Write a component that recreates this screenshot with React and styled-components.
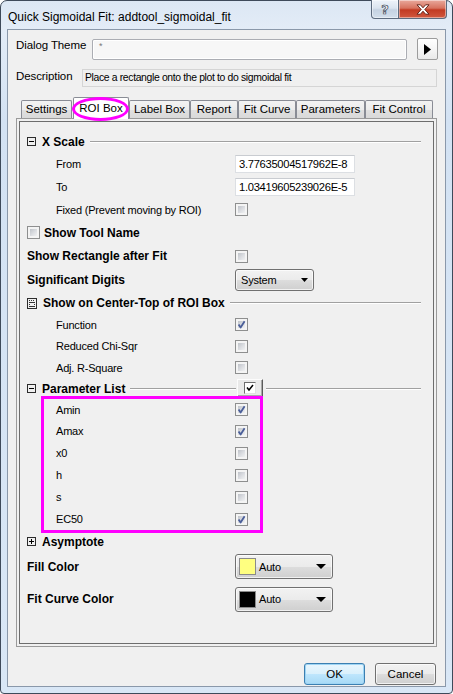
import React from 'react'
import styled, { createGlobalStyle } from 'styled-components'

const tabs = [
  { label: 'Settings', w: 51 },
  { label: 'ROI Box', w: 56, active: true },
  { label: 'Label Box', w: 61 },
  { label: 'Report', w: 48 },
  { label: 'Fit Curve', w: 58 },
  { label: 'Parameters', w: 69 },
  { label: 'Fit Control', w: 68 },
]

const centerTop = [
  { name: 'Function', on: true, h: 21 },
  { name: 'Reduced Chi-Sqr', on: false, h: 22 },
  { name: 'Adj. R-Square', on: false, h: 21 },
]

const params = [
  { name: 'Amin', on: true, h: 21 },
  { name: 'Amax', on: true, h: 22 },
  { name: 'x0', on: false, h: 22 },
  { name: 'h', on: false, h: 22 },
  { name: 's', on: false, h: 22 },
  { name: 'EC50', on: true, h: 22 },
]

const GlobalStyle = createGlobalStyle`
  html, body { margin: 0; padding: 0; background: #fff; }
  body {
    font-family: "Liberation Sans", Arial, sans-serif;
    font-size: 11px;
    letter-spacing: -0.2px;
    color: #000;
  }
  * { box-sizing: border-box; }
`

const Window = styled.div`
  width: 453px;
  height: 694px;
  border: 1px solid #3e4a5a;
  border-radius: 7px 7px 4px 4px;
  padding: 0 6px 6px;
  background: linear-gradient(180deg, #dce7f4 0px, #e3ecf7 28px, #d3e2f3 120px, #d9e7f6 100%);
  display: flex;
  flex-direction: column;
`

const TitleBar = styled.div`
  height: 28px;
  display: flex;
  align-items: flex-start;
`

const Title = styled.div`
  margin-top: 9px;
  padding-left: 1px;
  font-size: 12px;
  line-height: 14px;
  letter-spacing: 0;
`

const Caption = styled.div`
  margin-left: auto;
  margin-right: -1px;
  margin-top: -1px;
  display: flex;
`

const CapButton = styled.div`
  width: ${p => p.$w}px;
  height: 19px;
  border: 1px solid #5d6b7e;
  border-top: none;
  display: flex;
  align-items: center;
  justify-content: center;
  background: ${p => p.$close
    ? 'linear-gradient(180deg, #e9a99c 0%, #d7735f 45%, #c23a22 55%, #d1583f 100%)'
    : 'linear-gradient(180deg, #eef3fa 0%, #dbe4ef 45%, #c5d2e2 55%, #d3dfec 100%)'};
  border-radius: ${p => p.$close ? '0 0 4px 0' : '0 0 0 4px'};
  border-left: ${p => p.$close ? 'none' : '1px solid #5d6b7e'};
  box-shadow: inset 0 0 0 1px rgba(255, 255, 255, 0.45);
`

const HelpGlyph = styled.span`
  font-family: "DejaVu Sans", sans-serif;
  font-size: 13px;
  font-weight: bold;
  color: #f4f6f9;
  -webkit-text-stroke: 0.7px #3b4656;
  line-height: 1;
`

const Client = styled.div`
  flex: 1;
  border: 1px solid #8a98aa;
  background: #f0f0f0;
  display: flex;
  flex-direction: column;
`

const TopRow = styled.div`
  display: flex;
  align-items: flex-start;
  margin-top: ${p => p.$mt}px;
  padding-left: 8px;
`

const TopLabel = styled.div`
  width: ${p => p.$w}px;
  line-height: 14px;
  font-size: 11.5px;
  letter-spacing: -0.1px;
`

const ThemeField = styled.div`
  width: 315px;
  height: 21px;
  margin-top: 1px;
  border: 1px solid #abadb3;
  border-radius: 2px;
  background: #f7f7f7;
  box-shadow: inset 0 0 0 1px #fff;
  padding: 1px 0 0 6px;
  font-size: 9px;
  color: #777;
`

const ArrowButton = styled.div`
  width: 21px;
  height: 22px;
  margin-left: 10px;
  border: 1px solid #9c9c9c;
  border-radius: 2px;
  background: linear-gradient(180deg, #ffffff 0%, #f6f6f6 50%, #e9e9e9 100%);
  display: flex;
  align-items: center;
  justify-content: center;
`

const DescField = styled.div`
  width: 355px;
  height: 18px;
  border: 1px solid #d5d5d5;
  background: #f0f0f0;
  padding-left: 2px;
  line-height: 15px;
  font-size: 10.4px;
  letter-spacing: -0.35px;
`

const TabStrip = styled.div`
  display: flex;
  align-items: flex-end;
  height: 21px;
  margin-top: 10px;
  margin-left: 13px;
  position: relative;
  z-index: 2;
`

const Tab = styled.div`
  position: relative;
  width: ${p => p.$w}px;
  height: ${p => p.$active ? 22 : 18}px;
  margin-left: ${p => p.$active ? 1 : 0}px;
  margin-bottom: ${p => p.$active ? -1 : 0}px;
  padding-top: ${p => p.$active ? 2 : 0}px;
  border: 1px solid #898c95;
  border-bottom: none;
  border-radius: 2px 2px 0 0;
  background: ${p => p.$active
    ? '#ffffff'
    : 'linear-gradient(180deg, #f3f3f3 0%, #ececec 50%, #e0e0e0 51%, #d9d9d9 100%)'};
  text-align: center;
  line-height: 17px;
  font-size: 11.5px;
  letter-spacing: 0;
`

const Ellipse = styled.span`
  position: absolute;
  left: -2px;
  top: -1px;
  width: 57px;
  height: 24px;
  border: 3px solid #ff00ff;
  border-radius: 50%;
`

const Panel = styled.div`
  width: 421px;
  height: 529px;
  margin-left: 8px;
  border: 1px solid #9a9a9a;
  padding: 2px;
  position: relative;
  z-index: 1;
`

const Inner = styled.div`
  height: 100%;
  border: 1px solid #6d6d6d;
  padding: 9px 12px 0 7px;
`

const Row = styled.div`
  display: grid;
  grid-template-columns: ${p => 208 - (p.$indent || 0)}px auto;
  align-items: center;
  height: ${p => p.$h}px;
  padding-left: ${p => p.$indent || 0}px;
`

const Label = styled.span`
  line-height: 14px;
`

const BoldLabel = styled.span`
  font-size: 12px;
  font-weight: bold;
  letter-spacing: 0;
  line-height: 14px;
`

const GroupHead = styled.div`
  display: flex;
  align-items: center;
  height: ${p => p.$h}px;
`

const IconBox = styled.svg`
  flex: none;
  margin-right: ${p => p.$mr ?? 6}px;
`

const Rule = styled.span`
  flex: 1;
  height: 2px;
  border-top: 1px solid #a0a0a0;
  border-bottom: 1px solid #ffffff;
  margin-left: ${p => p.$ml ?? 5}px;
  margin-right: ${p => p.$mr ?? 0}px;
`

const ParamHead = styled.div`
  display: grid;
  grid-template-columns: 210px 26px 1fr;
  align-items: center;
  height: 21px;
`

const MiniButton = styled.div`
  width: 26px;
  height: 18px;
  margin-top: -2px;
  border: 1px solid #fcfcfc;
  border-right-color: #5a5a5a;
  border-bottom-color: #5a5a5a;
  background: #e9e9e9;
  box-shadow: inset -1px -1px 0 #a8a8a8;
  display: flex;
  align-items: center;
  justify-content: center;
`

const ClassicBox = styled.span`
  width: 12px;
  height: 12px;
  border: 1px solid #6d6d6d;
  border-right-color: #e0e0e0;
  border-bottom-color: #e0e0e0;
  background: #fff;
  display: flex;
  align-items: center;
  justify-content: center;
`

const CheckBox = styled.span`
  position: relative;
  display: inline-block;
  width: 13px;
  height: 13px;
  border: 1px solid #8e8f8f;
  background: #f4f4f4;
  padding: 2px;

  &::before {
    content: '';
    display: block;
    width: 100%;
    height: 100%;
    background: linear-gradient(135deg, #bfc3c9 0%, #dcdee2 55%, #f0f1f2 100%);
  }

  svg {
    position: absolute;
    left: -1px;
    top: -1px;
  }
`

const InlineCheck = styled.div`
  display: flex;
  align-items: center;
  gap: 4px;
  height: ${p => p.$h}px;
`

const Field = styled.div`
  width: 120px;
  height: 18px;
  background: #fff;
  border: 1px solid #dcdfe3;
  border-top-color: #c9ccd1;
  padding-left: 3px;
  line-height: 16px;
  font-size: 11.2px;
  letter-spacing: -0.3px;
`

const Dropdown = styled.div`
  width: ${p => p.$w}px;
  height: ${p => p.$h}px;
  border: 1px solid #707070;
  border-radius: 3px;
  background: linear-gradient(180deg, #f2f2f2 0%, #ebebeb 50%, #dddddd 51%, #cfcfcf 100%);
  box-shadow: inset 0 0 0 1px rgba(255, 255, 255, 0.7);
  display: flex;
  align-items: center;
  padding: 0 ${p => p.$pr}px 0 ${p => p.$pl}px;
`

const DropText = styled.span`
  flex: 1;
  line-height: 14px;
`

const Swatch = styled.span`
  width: 17px;
  height: 17px;
  border: 1px solid #8a8a8a;
  background: ${p => p.$color};
  margin-right: 3px;
`

const ParamGroup = styled.div`
  position: relative;
`

const Highlight = styled.span`
  position: absolute;
  left: 14px;
  top: -3px;
  width: 222px;
  height: 137px;
  border: 3px solid #ff00ff;
  pointer-events: none;
`

const ButtonRow = styled.div`
  display: flex;
  justify-content: flex-end;
  gap: 10px;
  margin-top: 16px;
  padding-right: 9px;
`

const DialogButton = styled.div`
  width: 61px;
  height: 22px;
  border: 1px solid ${p => p.$primary ? '#3c7fb1' : '#707070'};
  border-radius: 3px;
  background: ${p => p.$primary
    ? 'linear-gradient(180deg, #eaf6fd 0%, #d9f0fc 50%, #bee6fd 51%, #a7d9f5 100%)'
    : 'linear-gradient(180deg, #f2f2f2 0%, #ebebeb 50%, #dddddd 51%, #cfcfcf 100%)'};
  box-shadow: inset 0 0 0 1px ${p => p.$primary ? '#9fd5f4' : 'rgba(255,255,255,0.7)'};
  display: flex;
  align-items: center;
  justify-content: center;
  font-size: 11.5px;
  letter-spacing: 0;
`

function Check({ on }) {
  return (
    <CheckBox>
      {on && (
        <svg width="13" height="13" viewBox="0 0 13 13">
          <path d="M3.6 6.4 L5.6 9.6 L9.6 3.2" fill="none" stroke="#4b5f99" strokeWidth="1.8" strokeLinejoin="round" />
        </svg>
      )}
    </CheckBox>
  )
}

function Toggle({ plus }) {
  return (
    <IconBox width="9" height="9" viewBox="0 0 9 9">
      <rect x="0.5" y="0.5" width="8" height="8" fill="none" stroke="#2c2c2c" />
      <line x1="2" y1="4.5" x2="7" y2="4.5" stroke="#000" />
      {plus && <line x1="4.5" y1="2" x2="4.5" y2="7" stroke="#000" />}
    </IconBox>
  )
}

function MixedIcon() {
  return (
    <IconBox width="10" height="11" viewBox="0 0 10 11" $mr={6}>
      <rect x="0.5" y="0.5" width="9" height="10" fill="none" stroke="#2c2c2c" />
      <path d="M2 2.5h1M4 2.5h1M6 2.5h1M2 4.5h6M2 6.5h1M7 6.5h1M2 8.5h6" stroke="#333" />
    </IconBox>
  )
}

function Arrow({ w, h }) {
  return (
    <svg width={w} height={h} viewBox={`0 0 ${w} ${h}`}>
      <polygon points={`0,0 ${w},0 ${w / 2},${h}`} fill="#000" />
    </svg>
  )
}

export default function App() {
  return (
    <>
      <GlobalStyle />
      <Window>
        <TitleBar>
          <Title>Quick Sigmoidal Fit: addtool_sigmoidal_fit</Title>
          <Caption>
            <CapButton $w={28}><HelpGlyph>?</HelpGlyph></CapButton>
            <CapButton $w={48} $close>
              <svg width="14" height="11" viewBox="0 0 14 11">
                <path d="M1 0.8h3.4l2.6 3 2.6-3h3.4l-4.2 4.7 4.2 4.7h-3.4l-2.6-3-2.6 3h-3.4l4.2-4.7z"
                  fill="#fff" stroke="#5a1a10" strokeWidth="0.9" strokeLinejoin="round" />
              </svg>
            </CapButton>
          </Caption>
        </TitleBar>

        <Client>
          <TopRow $mt={8}>
            <TopLabel $w={76}>Dialog Theme</TopLabel>
            <ThemeField>*</ThemeField>
            <ArrowButton>
              <svg width="7" height="11" viewBox="0 0 7 11">
                <polygon points="0,0 7,5.5 0,11" fill="#000" />
              </svg>
            </ArrowButton>
          </TopRow>

          <TopRow $mt={9}>
            <TopLabel $w={66}>Description</TopLabel>
            <DescField>Place a rectangle onto the plot to do sigmoidal fit</DescField>
          </TopRow>

          <TabStrip>
            {tabs.map(t => (
              <Tab key={t.label} $w={t.w} $active={t.active}>
                {t.label}
                {t.active && <Ellipse />}
              </Tab>
            ))}
          </TabStrip>

          <Panel>
            <Inner>
              <GroupHead $h={21}>
                <Toggle />
                <BoldLabel>X Scale</BoldLabel>
                <Rule />
              </GroupHead>
              <Row $h={23} $indent={29}>
                <Label>From</Label>
                <Field>3.77635004517962E-8</Field>
              </Row>
              <Row $h={23} $indent={29}>
                <Label>To</Label>
                <Field>1.03419605239026E-5</Field>
              </Row>
              <Row $h={23} $indent={29}>
                <Label>Fixed (Prevent moving by ROI)</Label>
                <Check />
              </Row>

              <InlineCheck $h={23}>
                <Check />
                <BoldLabel>Show Tool Name</BoldLabel>
              </InlineCheck>

              <Row $h={24}>
                <BoldLabel>Show Rectangle after Fit</BoldLabel>
                <Check />
              </Row>
              <Row $h={24}>
                <BoldLabel>Significant Digits</BoldLabel>
                <Dropdown $w={79} $h={22} $pl={5} $pr={5}>
                  <DropText>System</DropText>
                  <Arrow w={7} h={4} />
                </Dropdown>
              </Row>

              <GroupHead $h={22}>
                <MixedIcon />
                <BoldLabel>Show on Center-Top of ROI Box</BoldLabel>
                <Rule />
              </GroupHead>
              {centerTop.map(item => (
                <Row key={item.name} $h={item.h} $indent={29}>
                  <Label>{item.name}</Label>
                  <Check on={item.on} />
                </Row>
              ))}

              <ParamHead>
                <GroupHead $h={21}>
                  <Toggle />
                  <BoldLabel>Parameter List</BoldLabel>
                  <Rule $mr={1} />
                </GroupHead>
                <MiniButton>
                  <ClassicBox>
                    <svg width="8" height="8" viewBox="0 0 8 8">
                      <path d="M1 3.5 L3 6 L7 1" fill="none" stroke="#000" strokeWidth="1.5" />
                    </svg>
                  </ClassicBox>
                </MiniButton>
                <Rule $ml={3} />
              </ParamHead>

              <ParamGroup>
                {params.map(p => (
                  <Row key={p.name} $h={p.h} $indent={29}>
                    <Label>{p.name}</Label>
                    <Check on={p.on} />
                  </Row>
                ))}
                <Highlight />
              </ParamGroup>

              <GroupHead $h={23}>
                <Toggle plus />
                <BoldLabel>Asymptote</BoldLabel>
              </GroupHead>

              <Row $h={27}>
                <BoldLabel>Fill Color</BoldLabel>
                <Dropdown $w={98} $h={25} $pl={3} $pr={6}>
                  <Swatch $color="#ffff80" />
                  <DropText>Auto</DropText>
                  <Arrow w={10} h={5} />
                </Dropdown>
              </Row>
              <Row $h={38}>
                <BoldLabel>Fit Curve Color</BoldLabel>
                <Dropdown $w={98} $h={25} $pl={3} $pr={6}>
                  <Swatch $color="#000000" />
                  <DropText>Auto</DropText>
                  <Arrow w={10} h={5} />
                </Dropdown>
              </Row>
            </Inner>
          </Panel>

          <ButtonRow>
            <DialogButton $primary>OK</DialogButton>
            <DialogButton>Cancel</DialogButton>
          </ButtonRow>
        </Client>
      </Window>
    </>
  )
}
